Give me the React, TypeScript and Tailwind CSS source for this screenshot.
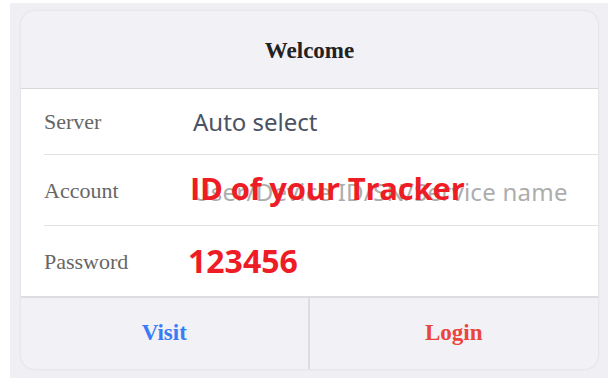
import React from "react";

export default function App() {
  const serif = "font-['Liberation_Serif','Times_New_Roman',serif]";
  const sans = "font-['Noto_Sans',sans-serif]";
  const red = "font-['Open_Sans',sans-serif]";
  return (
    <div className="w-[616px] h-[380px] bg-white">
      <div className="ml-[10px] pt-[3px] w-[598px] h-[378px]">
        <div className="w-[598px] h-[375px] bg-[#f0eff4] pl-[11px] pt-[8px]">
          <div className="w-[577px] h-[358px] rounded-[14px] overflow-hidden bg-[#f2f1f6] shadow-[0_0_3px_rgba(0,0,0,0.10)] flex flex-col">
            <div className={`h-[78px] pt-[3px] flex items-center justify-center border-b border-[#d8d8d8] text-[23px] font-bold text-[#222] ${serif}`}>
              Welcome
            </div>
            <div className="bg-white pl-[23px]">
              <div className="h-[66px] flex items-center border-b border-[#e2e2e2]">
                <div className={`w-[149px] text-[22px] text-[#666] ${serif}`}>Server</div>
                <div className={`text-[24px] text-[#4b5263] ${sans}`}>Auto select</div>
              </div>
              <div className="relative h-[71px] flex items-center border-b border-[#e2e2e2]">
                <div className={`w-[149px] text-[22px] text-[#666] ${serif}`}>Account</div>
                <div className={`pt-[3px] text-[24px] tracking-[0.25px] text-[#adadad] ${sans}`}>User/Device ID/SN/Service name</div>
                <div className={`absolute left-[146px] top-[10px] text-[31px] font-bold tracking-[-0.2px] text-[#ee1c25] ${red}`}>
                  ID of your Tracker
                </div>
              </div>
              <div className="h-[70px] flex items-center">
                <div className={`w-[144px] text-[22px] text-[#666] ${serif}`}>Password</div>
                <div className={`text-[32px] font-bold text-[#ee1c25] ${red}`}>123456</div>
              </div>
            </div>
            <div className="flex-1 grid grid-cols-2 border-t-2 border-[#dddde0]">
              <div className={`flex items-center justify-center border-r-2 border-[#dddde0] text-[23px] font-bold text-[#3a7cf5] ${serif}`}>
                Visit
              </div>
              <div className={`flex items-center justify-center text-[23px] font-bold text-[#e8463b] ${serif}`}>
                Login
              </div>
            </div>
          </div>
        </div>
      </div>
    </div>
  );
}
